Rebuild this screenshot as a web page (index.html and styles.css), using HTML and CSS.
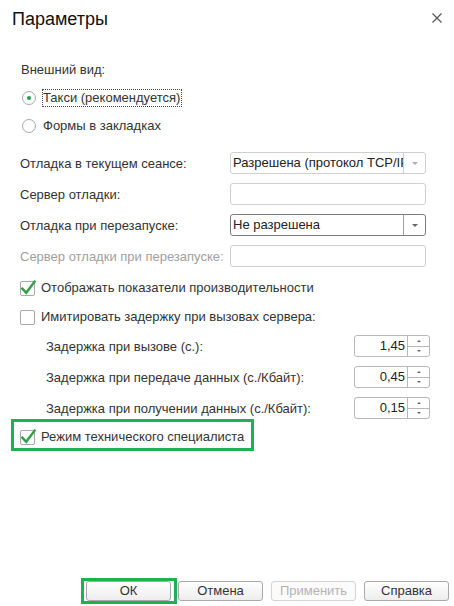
FILE: index.html
```html
<!DOCTYPE html>
<html lang="ru">
<head>
<meta charset="utf-8">
<title>Параметры</title>
<link rel="stylesheet" href="styles.css">
</head>
<body>
<div class="dialog">
  <header class="header">
    <h1 class="title">Параметры</h1>
    <span class="close" aria-label="Закрыть">
      <svg width="10" height="10" viewBox="0 0 10 10"><path d="M0.5 0.5 L9.5 9.5 M9.5 0.5 L0.5 9.5" stroke="#555" stroke-width="1.2" fill="none"/></svg>
    </span>
  </header>

  <main class="content">
    <div class="group-label">Внешний вид:</div>
    <div class="radio-row first">
      <span class="radio checked"></span>
      <span class="radio-text focus">Такси (рекомендуется)</span>
    </div>
    <div class="radio-row">
      <span class="radio"></span>
      <span class="radio-text">Формы в закладках</span>
    </div>

    <div class="form-rows">
      <div class="form-row">
        <span class="label">Отладка в текущем сеансе:</span>
        <div class="field select">
          <span class="value">Разрешена (протокол TCP/IP)</span>
          <span class="drop"><i class="arrow"></i></span>
        </div>
      </div>
      <div class="form-row">
        <span class="label">Сервер отладки:</span>
        <div class="field"><span class="value"></span></div>
      </div>
      <div class="form-row">
        <span class="label">Отладка при перезапуске:</span>
        <div class="field select focused">
          <span class="value">Не разрешена</span>
          <span class="drop"><i class="arrow"></i></span>
        </div>
      </div>
      <div class="form-row">
        <span class="label disabled">Сервер отладки при перезапуске:</span>
        <div class="field"><span class="value"></span></div>
      </div>
    </div>

    <div class="check-rows">
      <div class="check-row">
        <span class="checkbox"><svg width="15" height="15" viewBox="0 0 15 15"><path d="M2.3 7.6 L6.2 11.8 L14.6 0.6" stroke="#2e9f42" stroke-width="2.4" fill="none" stroke-linecap="square"/></svg></span>
        <span class="check-text">Отображать показатели производительности</span>
      </div>
      <div class="check-row">
        <span class="checkbox"></span>
        <span class="check-text">Имитировать задержку при вызовах сервера:</span>
      </div>
    </div>

    <div class="delay-rows">
      <div class="delay-row">
        <span class="label">Задержка при вызове (с.):</span>
        <div class="spin">
          <span class="spin-value">1,45</span>
          <span class="spin-btns"><span class="spin-btn"><i class="up"></i></span><span class="spin-btn"><i class="down"></i></span></span>
        </div>
      </div>
      <div class="delay-row">
        <span class="label">Задержка при передаче данных (с./Кбайт):</span>
        <div class="spin">
          <span class="spin-value">0,45</span>
          <span class="spin-btns"><span class="spin-btn"><i class="up"></i></span><span class="spin-btn"><i class="down"></i></span></span>
        </div>
      </div>
      <div class="delay-row">
        <span class="label">Задержка при получении данных (с./Кбайт):</span>
        <div class="spin">
          <span class="spin-value">0,15</span>
          <span class="spin-btns"><span class="spin-btn"><i class="up"></i></span><span class="spin-btn"><i class="down"></i></span></span>
        </div>
      </div>
    </div>

    <div class="highlight">
      <div class="check-row">
        <span class="checkbox"><svg width="15" height="15" viewBox="0 0 15 15"><path d="M2.3 7.6 L6.2 11.8 L14.6 0.6" stroke="#2e9f42" stroke-width="2.4" fill="none" stroke-linecap="square"/></svg></span>
        <span class="check-text">Режим технического специалиста</span>
      </div>
    </div>
  </main>

  <footer class="buttons">
    <div class="btn-highlight"><button class="btn">ОК</button></div>
    <button class="btn">Отмена</button>
    <button class="btn" disabled>Применить</button>
    <button class="btn">Справка</button>
  </footer>
</div>
</body>
</html>
```

FILE: styles.css
```css
* { box-sizing: border-box; }

html, body {
  margin: 0;
  padding: 0;
  background: #fff;
}

body {
  font-family: "Liberation Sans", Arial, sans-serif;
  font-size: 13px;
  color: #333;
}

.dialog {
  width: 454px;
  height: 606px;
  display: flex;
  flex-direction: column;
  background: #fff;
  overflow: hidden;
}

.header {
  display: flex;
  justify-content: space-between;
  align-items: flex-start;
  padding: 8px 12px 0 12px;
}

.title {
  margin: 0;
  font-size: 18px;
  font-weight: normal;
  line-height: 22px;
  color: #111;
}

.close {
  display: flex;
  margin-top: 5px;
}

.content {
  display: flex;
  flex-direction: column;
  padding: 0 0 0 20px;
}

.group-label {
  margin-top: 32px;
  line-height: 16px;
  padding-left: 1px;
}

.radio-row {
  display: flex;
  align-items: center;
  height: 22px;
  margin-top: 6px;
  padding-left: 2px;
}

.radio-row.first { margin-top: 9px; }

.radio {
  width: 14px;
  height: 14px;
  border: 1px solid #a8a8a8;
  border-radius: 50%;
  background: #fff;
  display: flex;
  align-items: center;
  justify-content: center;
  margin-right: 6px;
}

.radio.checked::after {
  content: "";
  width: 4px;
  height: 4px;
  border-radius: 50%;
  background: #1f9d4a;
}

.radio-text {
  line-height: 16px;
  border: 1px solid transparent;
  padding: 0 1px 0 0;
}

.radio-text.focus {
  border: 1px dotted #444;
}

.form-rows {
  display: flex;
  flex-direction: column;
  gap: 9px;
  margin-top: 15px;
}

.form-row {
  display: flex;
  align-items: center;
  height: 22px;
}

.label {
  width: 210px;
  white-space: nowrap;
}

.label.disabled { color: #a0a0a0; }

.field {
  width: 196px;
  height: 22px;
  border: 1px solid #cfcfcf;
  border-radius: 3px;
  display: flex;
  align-items: stretch;
  background: #fff;
  overflow: hidden;
}

.field.focused { border-color: #7c7c7c; }

.value {
  flex: 1;
  min-width: 0;
  overflow: hidden;
  white-space: nowrap;
  padding-left: 2px;
  line-height: 20px;
  color: #222;
}

.drop {
  width: 22px;
  border-left: 1px solid #cfcfcf;
  display: flex;
  align-items: center;
  justify-content: center;
}

.field.focused .drop { border-left-color: #a0a0a0; }

.arrow {
  width: 0;
  height: 0;
  border-left: 3px solid transparent;
  border-right: 3px solid transparent;
  border-top: 3px solid #b0b0b0;
}

.field.focused .arrow { border-top-color: #666; }

.check-rows {
  display: flex;
  flex-direction: column;
  gap: 7px;
  margin-top: 10px;
}

.check-row {
  display: flex;
  align-items: center;
  height: 22px;
}

.checkbox {
  width: 15px;
  height: 15px;
  border: 1px solid #a8a8a8;
  border-radius: 2px;
  background: #fff;
  display: flex;
  margin-right: 6px;
}

.checkbox svg {
  overflow: visible;
  margin: -1px 0 0 -1px;
}

.check-text { line-height: 16px; }

.delay-rows {
  display: flex;
  flex-direction: column;
  gap: 9px;
  margin-top: 7px;
  padding-left: 26px;
  padding-right: 24px;
}

.delay-row {
  display: flex;
  align-items: center;
  justify-content: space-between;
  height: 22px;
}

.delay-row .label { width: auto; }

.spin {
  width: 76px;
  height: 22px;
  border: 1px solid #b8b8b8;
  border-radius: 3px;
  display: flex;
  background: #fff;
  overflow: hidden;
}

.spin-value {
  flex: 1;
  text-align: right;
  line-height: 20px;
  padding-right: 2px;
  color: #222;
}

.spin-btns {
  width: 22px;
  border-left: 1px solid #b8b8b8;
  display: flex;
  flex-direction: column;
}

.spin-btn {
  flex: 1;
  display: flex;
  align-items: center;
  justify-content: center;
}

.spin-btn + .spin-btn { border-top: 1px solid #b8b8b8; }

.up, .down {
  width: 0;
  height: 0;
  border-left: 2px solid transparent;
  border-right: 2px solid transparent;
}

.up { border-bottom: 2px solid #666; }
.down { border-top: 2px solid #666; }

.highlight {
  width: 243px;
  margin-left: -9px;
  border: 3px solid #1bb24f;
  padding: 4px 0 0 6px;
}

.buttons {
  margin-top: auto;
  display: flex;
  align-items: center;
  justify-content: flex-end;
  gap: 8px;
  padding: 0 5px 2px 0;
}

.btn-highlight {
  border: 3px solid #1bb24f;
  padding: 0 3px 0 2px;
  margin-right: -7px;
  display: flex;
}

.btn {
  width: 85px;
  height: 20px;
  padding: 0;
  border: 1px solid #a9a9a9;
  border-radius: 3px;
  background: linear-gradient(#ffffff, #ededed);
  font-family: "Liberation Sans", Arial, sans-serif;
  font-size: 13px;
  color: #333;
  line-height: 18px;
}

.btn:disabled {
  border-color: #d4d4d4;
  background: #fbfbfb;
  color: #b4b4b4;
}
```
